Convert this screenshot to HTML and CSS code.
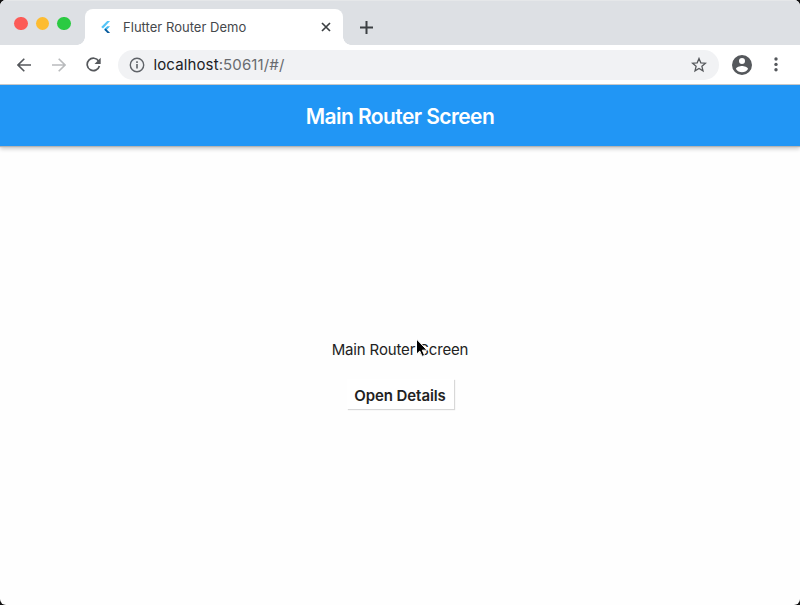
FILE: index.html
```html
<!DOCTYPE html>
<html lang="en">
<head>
<meta charset="utf-8">
<title>Flutter Router Demo</title>
<link rel="stylesheet" href="styles.css">
</head>
<body>
<div class="window">
  <header class="tabstrip">
    <div class="lights"><i class="light red"></i><i class="light yellow"></i><i class="light green"></i></div>
    <div class="tab">
      <svg class="logo" width="12" height="14" viewBox="0 0 12 14"><path d="M7.2 1h2.9L3 8.4 1.2 7z" fill="#54c5f8"/><path d="M7.2 6.2h2.9L5.6 11 3.8 9.5z" fill="#45b8ee"/><path d="M5.6 8.5l4.5 4.4H7.4L4.6 10z" fill="#075b9d"/></svg>
      <span class="tab-title">Flutter Router Demo</span>
      <svg class="close" width="10" height="10" viewBox="0 0 10 10"><path d="M1 1l8 8M9 1L1 9" stroke="#3c4043" stroke-width="1.7"/></svg>
    </div>
    <svg class="plus" width="13" height="13" viewBox="0 0 13 13"><path d="M6.5 0v13M0 6.5h13" stroke="#3c4043" stroke-width="2"/></svg>
  </header>
  <nav class="toolbar">
    <svg class="back" width="14" height="14" viewBox="0 0 14 14"><path d="M14 7H1.2M7.3.7L1 7l6.3 6.3" fill="none" stroke="#55585c" stroke-width="1.6"/></svg>
    <svg class="forward" width="14" height="14" viewBox="0 0 14 14"><path d="M0 7h12.8M6.7.7L13 7l-6.3 6.3" fill="none" stroke="#b9bbbd" stroke-width="1.6"/></svg>
    <svg class="reload" width="15" height="15" viewBox="0 0 15 15"><path d="M12.7 4.2A6.2 6.2 0 1 0 13.4 9" fill="none" stroke="#55585c" stroke-width="1.7"/><path d="M14.7.7v6.2H8.5z" fill="#55585c"/></svg>
    <div class="address">
      <svg class="info" width="16" height="16" viewBox="0 0 16 16"><circle cx="8" cy="8" r="6.7" fill="none" stroke="#5f6368" stroke-width="1.4"/><path d="M8 7v4.5M8 4.3v1.6" stroke="#5f6368" stroke-width="1.6"/></svg>
      <span class="url"><b>localhost</b>:50611/#/</span>
      <svg class="star" width="16" height="16" viewBox="0 0 16 16"><path d="M8 1.5l1.8 4.3 4.7.4-3.6 3.1 1.1 4.6-4-2.5-4 2.5 1.1-4.6-3.6-3.1 4.7-.4z" fill="none" stroke="#55585c" stroke-width="1.3"/></svg>
    </div>
    <svg class="profile" width="20" height="20" viewBox="2 2 20 20"><path fill="#55585c" d="M12 2a10 10 0 1 0 0 20 10 10 0 0 0 0-20zm0 3a3 3 0 1 1 0 6 3 3 0 0 1 0-6zm0 14.2a7.2 7.2 0 0 1-6-3.22c.03-1.99 4-3.08 6-3.08s5.97 1.09 6 3.08a7.2 7.2 0 0 1-6 3.22z"/></svg>
    <svg class="more" width="4" height="15" viewBox="0 0 4 15"><g fill="#55585c"><circle cx="2" cy="2" r="1.7"/><circle cx="2" cy="7.4" r="1.7"/><circle cx="2" cy="12.8" r="1.7"/></g></svg>
  </nav>
  <div class="appbar"><h1>Main Router Screen</h1></div>
  <main class="content">
    <p class="label">Main Router Screen</p>
    <button class="open">Open Details</button>
  </main>
  <svg class="cursor" width="14" height="21" viewBox="0 0 14 21"><path d="M1.5 1v15.2l3.3-3.1 2.3 5.3 2.5-1-2.3-5.2H12z" fill="#000" stroke="#fff" stroke-width="1"/></svg>
</div>
</body>
</html>
```
FILE: styles.css
```css
* { box-sizing: border-box; }
body { margin: 0; background: #111; font-family: Inter, "Liberation Sans", sans-serif; }
svg { display: block; flex: none; }
.window { width: 800px; height: 605px; display: flex; flex-direction: column; background: #fefefe; border-radius: 6px; overflow: hidden; position: relative; }
.tabstrip { height: 45px; flex: none; display: flex; align-items: flex-end; background: #dde0e4; border-top: 1px solid #e5e7e9; }
.lights { width: 85px; height: 45px; padding: 16.5px 0 0 14px; display: flex; gap: 8px; flex: none; }
.light { width: 13.5px; height: 13.5px; border-radius: 50%; }
.red { background: #fc5b57; }
.yellow { background: #fdbc31; }
.green { background: #2bca42; }
.tab { width: 258px; height: 36px; background: #fff; border-radius: 8px 8px 0 0; display: flex; align-items: center; padding: 0 12px 0 15px; position: relative; }
.tab::before, .tab::after { content: ""; position: absolute; bottom: 0; width: 8px; height: 8px; }
.tab::before { left: -8px; background: radial-gradient(circle at 0 0, transparent 7.5px, #fff 8px); }
.tab::after { right: -8px; background: radial-gradient(circle at 100% 0, transparent 7.5px, #fff 8px); }
.tab-title { margin-left: 11px; font-size: 13px; letter-spacing: 0.03px; color: #45484c; white-space: nowrap; }
.close { margin-left: auto; }
.plus { margin: 0 0 11px 17px; }
.toolbar { height: 40px; flex: none; display: flex; align-items: center; background: #fff; border-bottom: 1px solid #c8c8c8; }
.back { margin-left: 17px; }
.forward { margin-left: 21px; }
.reload { margin-left: 19.5px; }
.address { width: 601px; height: 30px; margin-left: 17px; border-radius: 15px; background: #f1f2f4; display: flex; align-items: center; padding: 0 12px 0 11px; }
.url { margin-left: 9px; font-size: 15px; letter-spacing: 0.12px; color: #686b6f; }
.url b { font-weight: 400; color: #202124; }
.star { margin-left: auto; }
.profile { margin-left: 13px; }
.more { margin-left: 22.5px; }
.appbar { height: 61px; flex: none; display: flex; align-items: center; justify-content: center; padding-top: 1px; background: #2196f5; box-shadow: 0 1px 1px #b5b5b5, 0 3px 4px #ccc; }
.appbar h1 { margin: 0; font-size: 21px; letter-spacing: -0.58px; font-weight: 600; color: #fff; }
.content { flex: 1; display: flex; flex-direction: column; align-items: center; padding-top: 194px; }
.label { margin: 0; height: 20px; line-height: 20px; font-size: 15px; letter-spacing: -0.15px; color: #222; white-space: nowrap; }
.open { width: 107px; height: 30px; margin: 19px 0 0 0; padding: 4px 0 0; border: 0; background: #fff; box-shadow: 1px 1px 1px #d8d8d8; font: 600 15px/26px Inter, sans-serif; letter-spacing: -0.08px; color: #222; white-space: nowrap; }
.cursor { position: absolute; left: 415px; top: 338px; }
```
